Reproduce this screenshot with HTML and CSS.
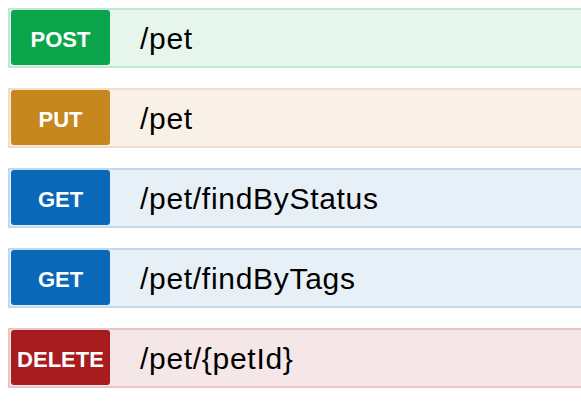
FILE: index.html
```html
<!DOCTYPE html>
<html>
<head>
<meta charset="utf-8">
<link rel="stylesheet" href="styles.css">
</head>
<body>
<div class="list">
  <div class="op op-post"><span class="method">POST</span><span class="path">/pet</span></div>
  <div class="op op-put"><span class="method">PUT</span><span class="path">/pet</span></div>
  <div class="op op-get"><span class="method">GET</span><span class="path">/pet/findByStatus</span></div>
  <div class="op op-get"><span class="method">GET</span><span class="path">/pet/findByTags</span></div>
  <div class="op op-delete"><span class="method">DELETE</span><span class="path">/pet/{petId}</span></div>
</div>
</body>
</html>
```
FILE: styles.css
```css
html, body {
  margin: 0;
  padding: 0;
  background: #ffffff;
  overflow: hidden;
}
body {
  padding: 8px 0 0 8px;
  font-family: "Liberation Sans", Arial, Helvetica, sans-serif;
}
.list {
  display: flex;
  flex-direction: column;
  gap: 20px;
  width: 573px;
}
.op {
  display: flex;
  align-items: flex-start;
  height: 56px;
  border: 2px solid;
  border-right: none;
  box-sizing: content-box;
}
.method {
  display: flex;
  align-items: center;
  justify-content: center;
  margin-left: 1px;
  width: 99px;
  height: 55px;
  padding-top: 4px;
  box-sizing: border-box;
  border-radius: 3px;
  color: #ffffff;
  font-weight: bold;
  font-size: 22px;
}
.path {
  align-self: center;
  margin-left: 30px;
  font-size: 30px;
  letter-spacing: 0.7px;
  color: #000000;
  padding-top: 2px;
}
.op-post { background: #e7f6ec; border-color: #c3e8d1; }
.op-post .method { background: #0ba64b; }
.op-put { background: #f9f1e7; border-color: #f0dfc8; }
.op-put .method { background: #c7871f; }
.op-get { background: #e7eff7; border-color: #c3d8ec; }
.op-get .method { background: #0a68b8; }
.op-delete { background: #f5e7e7; border-color: #e8c5c6; }
.op-delete .method { background: #a61c1f; }
```
